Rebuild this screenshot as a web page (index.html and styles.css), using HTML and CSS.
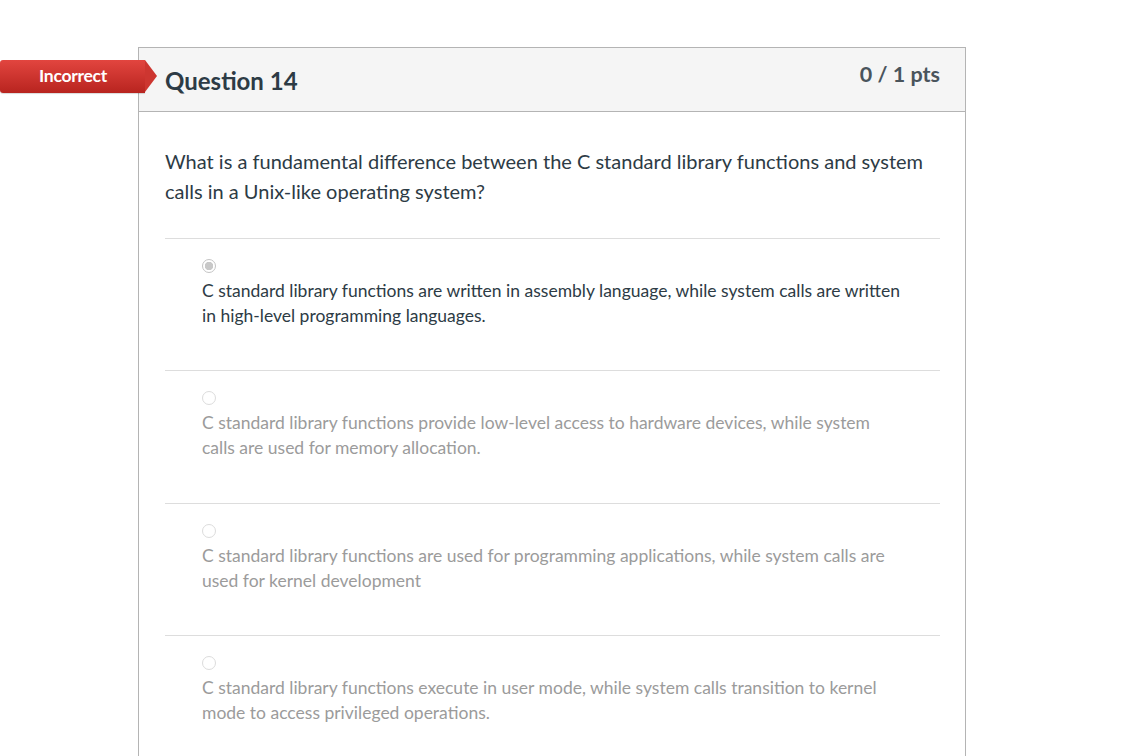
FILE: index.html
```html
<!DOCTYPE html>
<html>
<head>
<meta charset="utf-8">
<link rel="stylesheet" href="styles.css">
</head>
<body>
<div class="page">
  <div class="question">
    <div class="badge">Incorrect</div>
    <div class="q-header">
      <h2 class="q-title">Question 14</h2>
      <div class="q-pts">0 / 1 pts</div>
    </div>
    <div class="q-body">
      <p class="q-text">What is a fundamental difference between the C standard library functions and system calls in a Unix-like operating system?</p>
      <div class="answers">
        <div class="answer selected">
          <span class="radio"></span>
          <div class="a-text">C standard library functions are written in assembly language, while system calls are written in high-level programming languages.</div>
        </div>
        <div class="answer">
          <span class="radio"></span>
          <div class="a-text">C standard library functions provide low-level access to hardware devices, while system calls are used for memory allocation.</div>
        </div>
        <div class="answer">
          <span class="radio"></span>
          <div class="a-text">C standard library functions are used for programming applications, while system calls are used for kernel development</div>
        </div>
        <div class="answer">
          <span class="radio"></span>
          <div class="a-text">C standard library functions execute in user mode, while system calls transition to kernel mode to access privileged operations.</div>
        </div>
      </div>
    </div>
  </div>
</div>
</body>
</html>
```
FILE: styles.css
```css
html, body {
  margin: 0;
  padding: 0;
  background: #fff;
  font-family: Lato, "Open Sans", sans-serif;
  color: #2d3b45;
}
.page {
  padding: 47px 0 0 138px;
}
.question {
  position: relative;
  width: 826px;
  border: 1px solid #b4b4b4;
  border-bottom: none;
  min-height: 720px;
}
.badge {
  position: absolute;
  left: -139px;
  top: 12px;
  width: 145px;
  height: 33px;
  box-sizing: border-box;
  padding-left: 39px;
  line-height: 31px;
  font-size: 17.6px;
  font-weight: 700;
  color: #fff;
  letter-spacing: -0.3px;
  background: linear-gradient(#e2453f, #b8241f);
  border-radius: 3px 0 0 3px;
  box-shadow: 0 1px 1px rgba(0,0,0,0.15);
}
.badge::after {
  content: "";
  position: absolute;
  right: -12px;
  top: 0;
  width: 0;
  height: 0;
  border-top: 16.5px solid transparent;
  border-bottom: 16.5px solid transparent;
  border-left: 12px solid #cd3630;
}
.q-header {
  display: flex;
  justify-content: space-between;
  align-items: flex-start;
  background: #f5f5f5;
  border-bottom: 1px solid #b4b4b4;
  height: 63px;
  padding: 0 25px 0 26px;
}
.q-title {
  margin: 17px 0 0;
  font-size: 24px;
  line-height: 32px;
  font-weight: 700;
  color: #2d3b45;
}
.q-pts {
  margin-top: 12px;
  font-size: 21.5px;
  line-height: 28px;
  font-weight: 700;
  color: #4a545c;
}
.q-body {
  padding: 34px 25px 0 26px;
}
.q-text {
  margin: 0;
  font-size: 20px;
  line-height: 30px;
}
.answers {
  margin-top: 32px;
}
.answer {
  border-top: 1px solid #dddddd;
  padding: 20px 37px 41px 37px;
  height: 70.3px;
}
.radio {
  display: block;
  width: 14px;
  height: 14px;
  box-sizing: border-box;
  border-radius: 50%;
  border: 1px solid #dcdcdc;
  background: #fff;
  margin-bottom: 5px;
}
.answer.selected .radio {
  border: 1px solid #c4c4c4;
  background: radial-gradient(circle, #c8c8c8 0 4px, #fff 4.5px);
}
.a-text {
  font-size: 17.5px;
  line-height: 25px;
  color: #9b9b9b;
}
.answer.selected .a-text {
  color: #2d3b45;
}
```
